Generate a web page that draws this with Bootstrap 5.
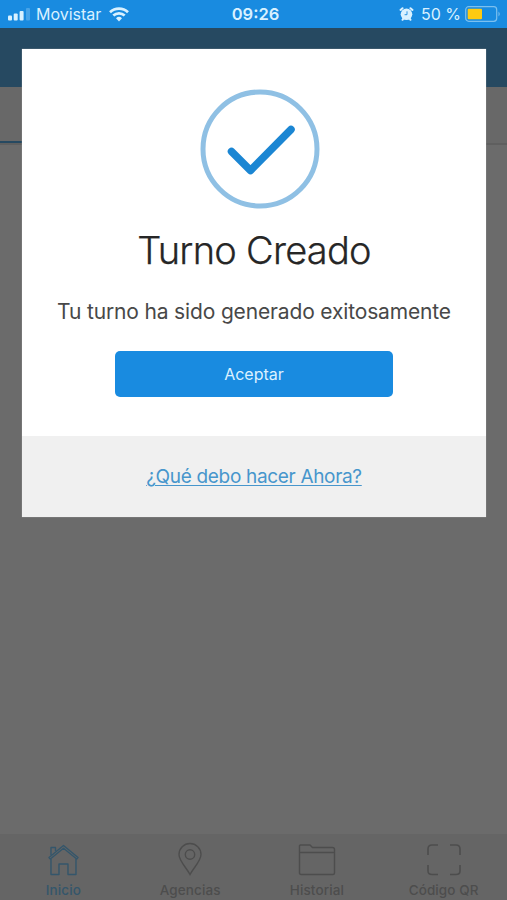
<!DOCTYPE html>
<html lang="es">
<head>
<meta charset="utf-8">
<meta name="viewport" content="width=device-width, initial-scale=1">
<title>Turno Creado</title>
<link href="https://cdn.jsdelivr.net/npm/bootstrap@5.3.0/dist/css/bootstrap.min.css" rel="stylesheet">
<style>
html,body{height:100%}
body{font-family:Inter,"Liberation Sans",sans-serif;background:#6b6b6b;overflow:hidden}
.screen{height:900px}
.status{height:28px;background:#198be0;color:#d9f1ff;font-size:16px;line-height:28px;padding:0 6px 0 8px}
.status>div{flex:1 1 0}
.status svg{flex:none}
.carrier{margin:0 8px 0 5px}
.percent{margin:0 4px 0 7px}
.clock{font-weight:600;font-size:16.5px;margin-left:2px}
.topbar{height:59px;background:#264961}
.tabs{height:58px;background:#686868;border-bottom:2px solid #5f5f5f}
.tab-on{width:25%;height:56px;border-bottom:2px solid #264961}
.dialog-layer{top:49px;left:22px;width:464px}
.dialog-box{height:468px;background:#fff;box-shadow:0 0 1px #aaa}
.dialog-main{height:386.5px;padding-top:40px}
.check{margin-left:11px}
.title{font-size:38px;line-height:48px;font-weight:300;letter-spacing:-.75px;color:#262626;margin:17px 0 0;-webkit-text-stroke:.25px #262626}
.msg{font-size:21px;line-height:28px;letter-spacing:-.15px;color:#484848;margin:24px 0 0}
.btn-ok{width:278px;height:46px;margin-top:24.5px;background:#198be0;color:#dcf1ff;font-size:16px;border:0;border-radius:5px}
.btn-ok:hover{background:#177ecb;color:#fff}
.dialog-foot{background:#f0f0f0;padding-top:2px}
.dialog-foot a{color:#4796cc;font-size:19px;line-height:28px;letter-spacing:-.32px;text-underline-offset:2px;text-decoration-thickness:1px}
.bottom{height:66px;background:#656565;color:#4d4d4d;font-size:13.5px;font-weight:500;letter-spacing:.1px}
.bottom a{color:inherit;padding-top:8px}
.bottom a.current{color:#34566b}
.bottom svg{display:block;margin:0 auto 3px}
.bottom span{display:block;line-height:18px}
</style>
</head>
<body>
<div class="screen d-flex flex-column position-relative">
  <header class="status d-flex align-items-center">
    <div class="d-flex align-items-center">
      <svg width="23" height="13" viewBox="0 0 23 13" fill="#d9f1ff"><rect y="7.5" width="4" height="5" rx="1"/><rect x="5.7" y="5.5" width="4" height="7" rx="1"/><rect x="11.6" y="3" width="4" height="9.500" rx="1"/><rect x="18" y="0" width="4" height="12.500" rx="1" opacity=".25"/></svg>
      <span class="carrier">Movistar</span>
      <svg width="20" height="15" viewBox="0 0 20 15" fill="none" stroke="#d9f1ff" stroke-width="2.700"><path d="M1 5.200a13 13 0 0 1 18 0M4.300 8.600a8.300 8.300 0 0 1 11.400 0"/><path d="M10 14.500l-3-3.200a4.300 4.300 0 0 1 6 0z" fill="#d9f1ff" stroke="none"/></svg>
    </div>
    <span class="clock">09:26</span>
    <div class="d-flex align-items-center justify-content-end">
      <svg width="15" height="14" viewBox="0 0 15 14"><g stroke="#d9f1ff" stroke-width="2" stroke-linecap="round"><path d="M1.500 2.900l2-1.700M13.500 2.900l-2-1.700M3.500 12.800l1-1.300M11.500 12.800l-1-1.300"/></g><circle cx="7.500" cy="7.300" r="5.800" fill="#d9f1ff"/><path d="M8 4.300v3.400H5.600" fill="none" stroke="#198be0" stroke-width=".9"/></svg>
      <span class="percent">50 %</span>
      <svg width="36" height="16" viewBox="0 0 36 16"><rect x=".7" y=".7" width="31" height="14.600" rx="3" fill="none" stroke="#7cc0ef" stroke-width="1.200"/><rect x="2.700" y="2.700" width="14.300" height="10.600" rx="1" fill="#fdca12"/><path d="M33.500 5.500q2.500 2.500 0 5z" fill="#7cc0ef"/></svg>
    </div>
  </header>
  <div class="topbar"></div>
  <div class="tabs"><div class="tab-on"></div></div>
  <main class="flex-grow-1"></main>
  <nav class="bottom d-flex text-center">
    <a href="#" class="col-3 text-decoration-none current">
      <svg width="32" height="36" viewBox="-.5 0 32 36" fill="none" stroke="currentColor" stroke-width="1.400" stroke-linejoin="round"><path d="M1.500 15.500L16 3.500l14.500 12-1.300 1.500L16 6.300 2.800 17z"/><path d="M3.500 17v15.500h8V22h9v10.500h8V17M3.500 13V5.500H8V9"/></svg>
      <span>Inicio</span></a>
    <a href="#" class="col-3 text-decoration-none">
      <svg width="32" height="36" viewBox="0 0 32 36" fill="none" stroke="currentColor" stroke-width="1.400"><path d="M16 32.500C13 26.500 5 19 5 12.500a11 11 0 0 1 22 0C27 19 19 26.500 16 32.500z"/><circle cx="16" cy="12.500" r="4.700"/></svg>
      <span>Agencias</span></a>
    <a href="#" class="col-3 text-decoration-none">
      <svg width="38" height="36" viewBox="0 0 38 36" fill="none" stroke="currentColor" stroke-width="1.400"><path d="M1.500 31V4q0-1 1-1H12l2.500 2.500h20q2 0 2 2V31q0 1.500-1.500 1.500H3Q1.500 32.500 1.500 31zM1.500 10.500h35"/></svg>
      <span>Historial</span></a>
    <a href="#" class="col-3 text-decoration-none">
      <svg width="36" height="36" viewBox="0 0 36 36" fill="none" stroke="currentColor" stroke-width="1.600"><path d="M2 13V7q0-4 4-4h6M24 3h6q4 0 4 4v6M34 23v6q0 3.500-4 3.500h-6M12 32.500H6q-4 0-4-3.500v-6"/></svg>
      <span>Código QR</span></a>
  </nav>
  <div class="dialog-layer position-absolute">
    <section class="dialog-box d-flex flex-column text-center" role="dialog" aria-modal="true">
      <div class="dialog-main d-flex flex-column align-items-center">
        <svg class="check flex-shrink-0" width="120" height="120" viewBox="0 0 120 120" fill="none"><circle cx="60" cy="60" r="57" stroke="#8fc0e4" stroke-width="5"/><path d="M31.500 62.500l19 19L91 40.500" stroke="#1b86d3" stroke-width="7.500" stroke-linecap="round" stroke-linejoin="round"/></svg>
        <h1 class="title">Turno Creado</h1>
        <p class="msg">Tu turno ha sido generado exitosamente</p>
        <button type="button" class="btn btn-ok">Aceptar</button>
      </div>
      <div class="dialog-foot flex-grow-1 d-flex align-items-center justify-content-center"><a href="#">¿Qué debo hacer Ahora?</a></div>
    </section>
  </div>
</div>
<script src="https://cdn.jsdelivr.net/npm/bootstrap@5.3.0/dist/js/bootstrap.bundle.min.js"></script>
</body>
</html>
